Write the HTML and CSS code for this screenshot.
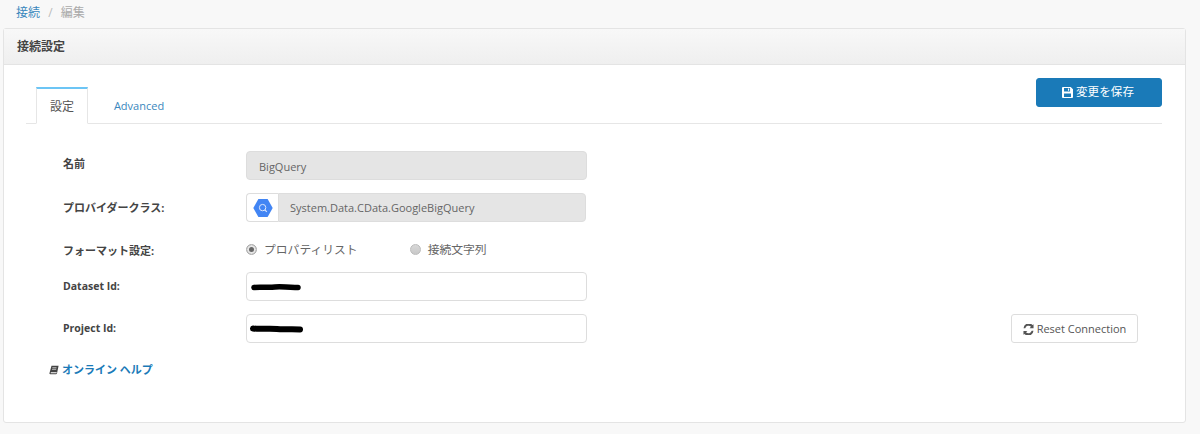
FILE: index.html
```html
<!DOCTYPE html>
<html lang="ja">
<head>
  <meta charset="UTF-8">
  <title>接続設定</title>
  <link rel="stylesheet" href="styles.css">
</head>

<body>
  <div class="crumbs">
    <a href="#">接続</a>
    <span class="sep">/</span>
    <span class="current">編集</span>
  </div>

  <div class="panel">
    <div class="panel-head">接続設定</div>
    <div class="panel-body">
      <div class="tabbar">
        <div class="tab active">設定</div>
        <div class="tab"><a href="#">Advanced</a></div>
        <button class="btn btn-save">
          <svg class="icon" viewBox="0 0 12 12"><path fill="currentColor" fill-rule="evenodd" d="M1 0h8.500L12 2.500V11a1 1 0 0 1-1 1H1a1 1 0 0 1-1-1V1a1 1 0 0 1 1-1zm1.200 1.200v3.600h6.600V1.200zm4.300.4h1.300v2.600H6.500zM2.200 7v3.800h7.600V7z"/></svg>
          変更を保存
        </button>
      </div>

      <div class="form">
        <div class="row row-name">
          <label>名前</label>
          <input class="field" type="text" value="BigQuery" disabled>
        </div>

        <div class="row row-class">
          <label>プロバイダークラス:</label>
          <div class="group">
            <span class="addon">
              <svg viewBox="0 0 20 20" width="20" height="20">
                <path fill="#4285f4" d="M5.400 1h9.200L19.700 10l-5.100 9H5.400L.3 10z"/>
                <circle cx="9.600" cy="9.600" r="3.200" fill="none" stroke="#dbe7fd" stroke-width="1"/>
                <path stroke="#dbe7fd" stroke-width="1.200" d="M11.800 11.800l2 2"/>
              </svg>
            </span>
            <input class="field group-field" type="text" value="System.Data.CData.GoogleBigQuery" disabled>
          </div>
        </div>

        <div class="row row-format">
          <label>フォーマット設定:</label>
          <div class="radios">
            <span class="radio checked"></span><span class="radio-text">プロパティリスト</span>
            <span class="radio second"></span><span class="radio-text">接続文字列</span>
          </div>
        </div>

        <div class="row row-dataset">
          <label class="latin">Dataset Id:</label>
          <div class="masked">
            <input class="field" type="text" value="">
            <svg class="scribble" viewBox="0 0 60 12" width="60" height="12"><path d="M7 6.500C14 5.500 20 7 28 6s12 1 23 .5" fill="none" stroke="#000" stroke-width="5.500" stroke-linecap="round"/></svg>
          </div>
        </div>

        <div class="row row-project">
          <label class="latin">Project Id:</label>
          <div class="masked">
            <input class="field" type="text" value="">
            <svg class="scribble" viewBox="0 0 60 12" width="60" height="12"><path d="M6 5.500C14 6.500 22 5 30 6s12-.5 23 .5" fill="none" stroke="#000" stroke-width="6" stroke-linecap="round"/></svg>
          </div>
          <button class="btn btn-reset">
            <svg class="icon" viewBox="0 0 12 12"><path fill="currentColor" d="M10.400 1.200l1.100-1v4.300H7.200l1.500-1.500A3.700 3.700 0 0 0 2.500 4.600H.6a5.600 5.600 0 0 1 9.800-3.400zM1.600 10.800l-1.100 1V7.500h4.300L3.300 9a3.700 3.700 0 0 0 6.200-1.600h1.900a5.600 5.600 0 0 1-9.800 3.400z"/></svg>
            Reset Connection
          </button>
        </div>
      </div>

      <div class="help">
        <svg class="icon book" viewBox="0 0 12 12"><path fill="#444" fill-rule="evenodd" d="M3 1h8.500L9.600 10.200c-.2.6-.6.8-1.200.8H1.500C.7 11 .3 10.400.6 9.600zM4 3v.8h5V3zM3.600 5v.8h5V5zM2 9.200c-.2.6.1.8.5.8h6c.3 0 .5-.1.6-.4l.2-.8H2.300z"/></svg>
        <a href="#">オンライン ヘルプ</a>
      </div>
    </div>
  </div>
</body>
</html>
```

FILE: styles.css
```css
* {
  box-sizing: border-box;
}

body {
  margin: 0;
  height: 434px;
  overflow: hidden;
  background: #f8f8f8;
  color: #555;
  font: 12px/1.4 "Open Sans", "Noto Sans CJK JP", sans-serif;
}

a {
  color: #3a87bd;
  text-decoration: none;
}

.crumbs {
  height: 28px;
  padding: 5px 0 0 16px;
  font-size: 12px;
}

.crumbs .sep {
  margin: 0 5px;
  color: #bbb;
}

.crumbs .current {
  color: #aaa;
}

.panel {
  width: 1183px;
  height: 395px;
  margin-left: 3px;
  background: #fff;
  border: 1px solid #e4e4e4;
  border-radius: 3px;
}

.panel-head {
  height: 36px;
  padding: 0 13px;
  line-height: 36px;
  font-weight: 700;
  color: #444;
  background: linear-gradient(#f8f8f8, #efefef);
  border-bottom: 1px solid #e4e4e4;
}

.panel-body {
  padding: 0 23px 0 22px;
}

.tabbar {
  display: flex;
  align-items: flex-end;
  height: 59px;
  padding-left: 10px;
  border-bottom: 1px solid #e6e6e6;
}

.tab {
  width: 52px;
  height: 37px;
  line-height: 36px;
  text-align: center;
  color: #555;
}

.tab.active {
  margin-bottom: -1px;
  height: 37px;
  background: #fff;
  border: 1px solid #e6e6e6;
  border-top: 2px solid #6cc5f5;
  border-bottom-color: #fff;
}

.tab a {
  display: block;
  width: 102px;
  margin-top: 2px;
  font-size: 11px;
}

.btn {
  display: inline-flex;
  align-items: center;
  justify-content: center;
  gap: 3px;
  height: 29px;
  border-radius: 3px;
  font: inherit;
}

.btn-save {
  width: 126px;
  margin-left: auto;
  margin-bottom: 16px;
  padding-right: 8px;
  font-size: 11.600px;
  color: #fff;
  background: #1a7ab8;
  border: 1px solid #1a7ab8;
}

.btn-reset {
  width: 127px;
  margin-left: auto;
  margin-right: 24px;
  padding-top: 2px;
  font-size: 11px;
  color: #555;
  background: #fff;
  border: 1px solid #ddd;
}

.icon {
  width: 11px;
  height: 11px;
  flex: none;
}

.form {
  padding-top: 27px;
}

.row {
  display: flex;
  align-items: center;
  padding-left: 37px;
}

.row label {
  width: 183px;
  flex: none;
  font-weight: 700;
  font-size: 11px;
  color: #444;
}

.row label.latin {
  font-size: 10.500px;
}

.row-name label {
  margin-top: -3px;
}

.row-class {
  margin-top: 13px;
}

.row-format {
  height: 22px;
  margin-top: 18px;
}

.row-dataset {
  margin-top: 10px;
}

.row-project {
  margin-top: 13px;
}

.field {
  display: block;
  width: 341px;
  height: 29px;
  padding: 2px 12px 0;
  font: inherit;
  font-size: 11px;
  color: #666;
  background: #fff;
  border: 1px solid #ddd;
  border-radius: 4px;
}

.field:disabled {
  background: #e5e5e5;
}

.group {
  display: flex;
  width: 340px;
  height: 29px;
}

.addon {
  display: flex;
  align-items: center;
  justify-content: center;
  width: 32px;
  flex: none;
  background: #fff;
  border: 1px solid #ddd;
  border-right: 0;
  border-radius: 4px 0 0 4px;
}

.group-field {
  width: auto;
  flex: 1;
  padding: 0 11px;
  border-radius: 0 4px 4px 0;
}

.radios {
  display: flex;
  align-items: center;
  margin-top: -3px;
  font-size: 11.800px;
  color: #666;
}

.radio {
  width: 11px;
  height: 11px;
  margin-right: 7px;
  background: linear-gradient(#d8d8d8, #c8c8c8);
  border: 1px solid #bbb;
  border-radius: 50%;
}

.radio.checked {
  background: #fff;
  border-color: #aaa;
  box-shadow: inset 0 0 0 2px #e6e6e6, inset 0 0 0 5px #666;
}

.radio.second {
  margin-left: 52px;
}

.masked {
  position: relative;
}

/* redaction marks lying over the values */
.scribble {
  position: absolute;
  left: 1px;
  top: 9px;
}

.help {
  display: flex;
  align-items: center;
  gap: 3px;
  margin-top: 19px;
  padding-left: 23px;
  font-size: 11px;
  font-weight: 700;
}

.help a {
  color: #1a7ab8;
}

.book {
  width: 10px;
  height: 10px;
}
```
